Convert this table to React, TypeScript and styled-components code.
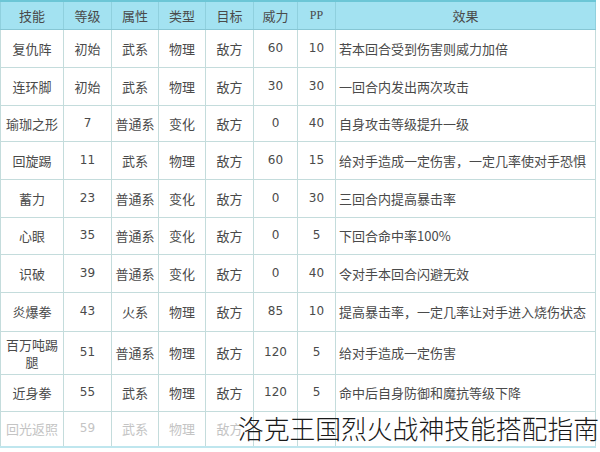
import React from "react";
import styled, { createGlobalStyle } from "styled-components";

const Global = createGlobalStyle`
  html, body { margin: 0; padding: 0; background: #ffffff; }
  body { font-family: "Noto Sans CJK SC", "Noto Sans", sans-serif; }
`;

const Page = styled.div`
  position: relative;
  width: 600px;
  height: 452px;
  overflow: hidden;
  background: #ffffff;
`;

const Table = styled.table`
  width: 595px;
  table-layout: fixed;
  border-collapse: collapse;
  border-top: 2px solid #6cc6d6;
  border-bottom: 2px solid #bfe6ee;
  font-family: "Noto Sans CJK SC", "Noto Sans", sans-serif;
`;

const HeadRow = styled.tr`
  height: 28px;
  background: #a3e2f1;
`;

const Th = styled.th<{ $serif?: boolean }>`
  border: 1px solid #8fd0de;
  border-bottom-color: #86c6d4;
  font-weight: 400;
  font-size: ${(p) => (p.$serif ? "12px" : "13px")};
  font-family: ${(p) =>
    p.$serif ? '"Liberation Serif", serif' : '"Noto Sans CJK SC", "Noto Sans", sans-serif'};
  color: #4a4a4a;
  text-align: center;
  padding: 0;
  line-height: 1;
`;

const Row = styled.tr<{ $h: number }>`
  height: ${(p) => p.$h}px;
`;

const Td = styled.td<{ $faded?: boolean; $num?: boolean; $left?: boolean }>`
  border: 1px solid #c4dcdc;
  padding: 0 3px;
  text-align: ${(p) => (p.$left ? "left" : "center")};
  padding-left: ${(p) => (p.$left ? "3px" : "3px")};
  font-size: ${(p) => (p.$num ? "12px" : "13px")};
  font-family: ${(p) =>
    p.$num ? '"DejaVu Sans", "Noto Sans", sans-serif' : '"Noto Sans CJK SC", "Noto Sans", sans-serif'};
  color: ${(p) => (p.$faded ? "#c4c4c4" : "#4a4a4a")};
  line-height: 17px;
  word-break: break-all;
  white-space: ${(p) => (p.$left ? "nowrap" : "normal")};
  overflow: hidden;
`;

const Watermark = styled.div`
  position: absolute;
  right: 1px;
  top: 413px;
  font-family: "Noto Sans CJK SC", sans-serif;
  font-weight: 300;
  font-size: 25.8px;
  line-height: 30px;
  color: #1a1a1a;
  white-space: nowrap;
`;

const cols = [63, 48, 47, 47, 48, 44, 38, 260];
const heads = ["技能", "等级", "属性", "类型", "目标", "威力", "PP", "效果"];

type R = [string, string, string, string, string, string, string, string, number];

const rows: R[] = [
  ["复仇阵", "初始", "武系", "物理", "敌方", "60", "10", "若本回合受到伤害则威力加倍", 38],
  ["连环脚", "初始", "武系", "物理", "敌方", "30", "30", "一回合内发出两次攻击", 38],
  ["瑜珈之形", "7", "普通系", "变化", "敌方", "0", "40", "自身攻击等级提升一级", 36],
  ["回旋踢", "11", "武系", "物理", "敌方", "60", "15", "给对手造成一定伤害，一定几率使对手恐惧", 38],
  ["蓄力", "23", "普通系", "变化", "敌方", "0", "30", "三回合内提高暴击率", 38],
  ["心眼", "35", "普通系", "变化", "敌方", "0", "5", "下回合命中率100%", 37],
  ["识破", "39", "普通系", "变化", "敌方", "0", "40", "令对手本回合闪避无效", 38],
  ["炎爆拳", "43", "火系", "物理", "敌方", "85", "10", "提高暴击率，一定几率让对手进入烧伤状态", 39],
  ["百万吨踢腿", "51", "普通系", "物理", "敌方", "120", "5", "给对手造成一定伤害", 43],
  ["近身拳", "55", "武系", "物理", "敌方", "120", "5", "命中后自身防御和魔抗等级下降", 37],
  ["回光返照", "59", "武系", "物理", "敌方", "", "", "", 36],
];

const isNum = (s: string) => /^[0-9]+$/.test(s);

export default function App() {
  return (
    <Page>
      <Global />
      <Table>
        <colgroup>
          {cols.map((w, i) => (
            <col key={i} style={{ width: w }} />
          ))}
        </colgroup>
        <thead>
          <HeadRow>
            {heads.map((h) => (
              <Th key={h} $serif={h === "PP"}>
                {h}
              </Th>
            ))}
          </HeadRow>
        </thead>
        <tbody>
          {rows.map((r, i) => {
            const faded = i === rows.length - 1;
            return (
              <Row key={i} $h={r[8]}>
                {r.slice(0, 8).map((c, j) => (
                  <Td key={j} $faded={faded} $num={isNum(c as string)} $left={j === 7}>
                    {c}
                  </Td>
                ))}
              </Row>
            );
          })}
        </tbody>
      </Table>
      <Watermark>洛克王国烈火战神技能搭配指南</Watermark>
    </Page>
  );
}
